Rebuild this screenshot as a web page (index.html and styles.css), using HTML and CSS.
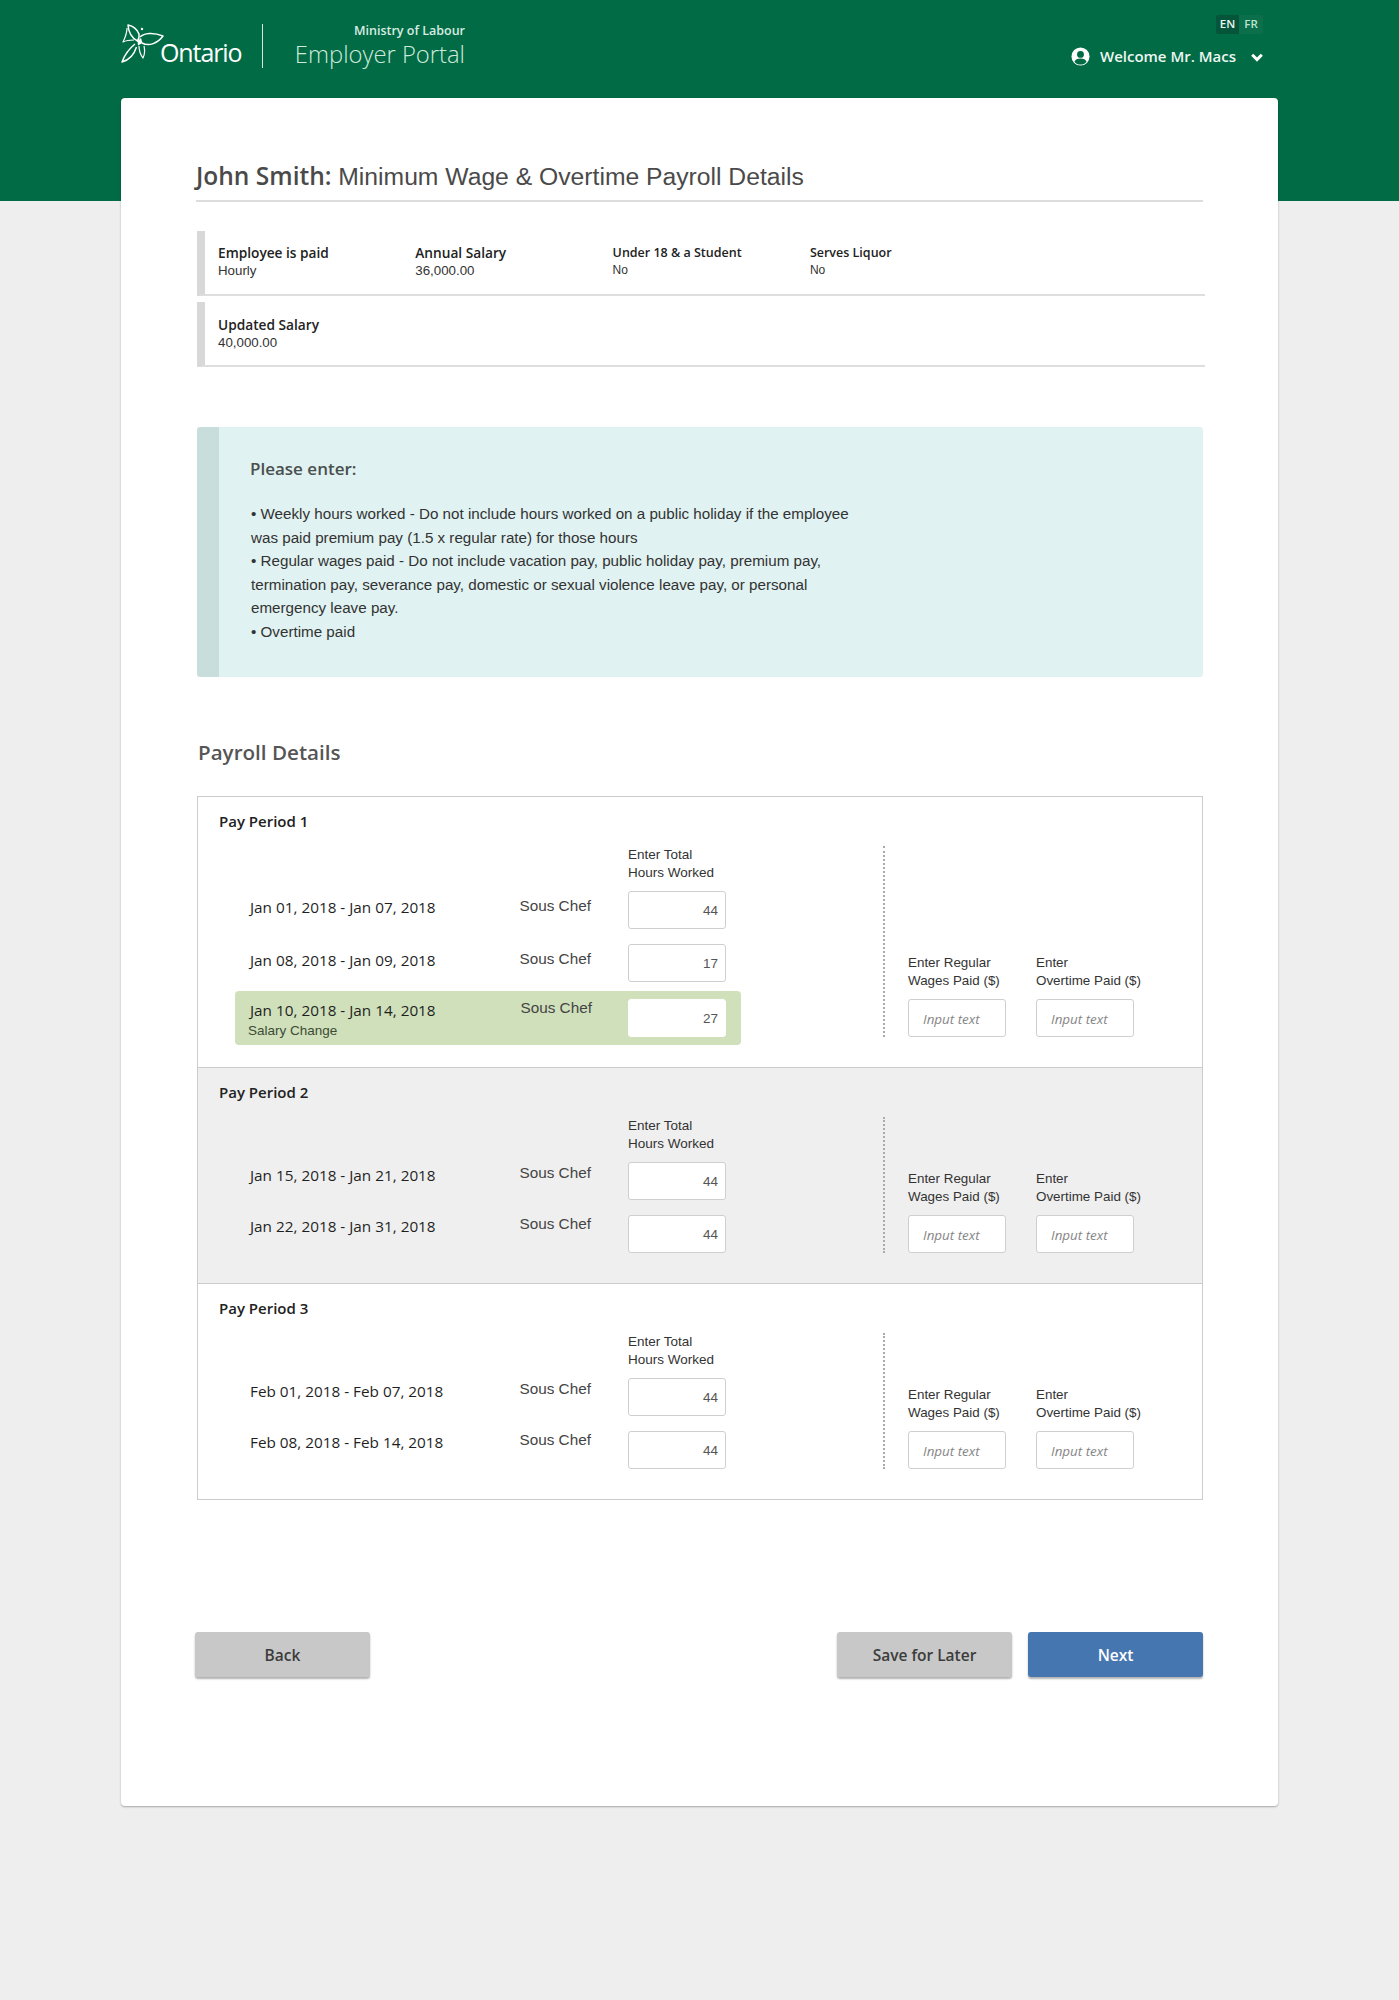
FILE: index.html
```html
<!DOCTYPE html>
<html lang="en">
<head>
  <meta charset="UTF-8">
  <meta name="viewport" content="width=device-width, initial-scale=1.0">
  <title>Employer Portal - Payroll Details</title>
  <link rel="stylesheet" href="styles.css">
</head>
<body>
  <header class="topbar">
    <div class="brand">
      <svg class="trillium" viewBox="0 0 43 40" width="43" height="40" fill="none" stroke="#fff" stroke-width="1.5" stroke-linejoin="round">
        <path d="M7 2 C12 3 16 6 18 11 C18.5 14 18 16 16.5 18 C11 15 7.5 10 7 2 Z"/>
        <path d="M19 14 C23 10 32 9 42 13 C37 20 28 24 21 20"/>
        <path d="M14 21 C9 25 4 31 1 39 C8 37 13 32 15.5 24"/>
        <path d="M6 5 C6 10 4 15 2 19 C6 17 10 17 13 17" stroke-width="1.2"/>
        <path d="M18 23 C18 27 19 31 22 35 C24 31 24 27 23 23" stroke-width="1.2"/>
        <circle cx="21" cy="6" r="1.2" fill="#fff" stroke="none"/>
        <path d="M16.5 18 L20 15 L21.5 20 L17 22.5 Z" fill="#fff" stroke="none"/>
      </svg>
      <span class="wordmark">Ontario</span>
      <span class="brand-sep"></span>
      <div class="portal">
        <div class="ministry">Ministry of Labour</div>
        <div class="portal-name">Employer Portal</div>
      </div>
    </div>
    <div class="account">
      <div class="lang"><span class="lang-on">EN</span><span>FR</span></div>
      <div class="welcome">
        <svg viewBox="0 0 20 20" width="19" height="19">
          <circle cx="10" cy="10" r="9.5" fill="#fff"/>
          <circle cx="10" cy="7.8" r="3.6" fill="#006b45"/>
          <path d="M3.6 15.4 C5 12.6 7.4 12 10 12 C12.6 12 15 12.6 16.4 15.4 C15 17.4 12.6 18.4 10 18.4 C7.4 18.4 5 17.4 3.6 15.4 Z" fill="#006b45"/>
        </svg>
        <span>Welcome Mr. Macs</span>
        <svg class="chev" viewBox="0 0 12 9" width="12" height="9" fill="none" stroke="#fff" stroke-width="3">
          <path d="M1.2 1.8 L6 6.6 L10.8 1.8"/>
        </svg>
      </div>
    </div>
  </header>

  <main class="card">
    <h1 class="title"><b>John Smith:</b> Minimum Wage &amp; Overtime Payroll Details</h1>

    <div class="info-row">
      <div class="info"><strong>Employee is paid</strong><span>Hourly</span></div>
      <div class="info"><strong>Annual Salary</strong><span>36,000.00</span></div>
      <div class="info small"><strong>Under 18 &amp; a Student</strong><span>No</span></div>
      <div class="info small"><strong>Serves Liquor</strong><span>No</span></div>
    </div>
    <div class="info-row">
      <div class="info"><strong>Updated Salary</strong><span>40,000.00</span></div>
    </div>

    <section class="notice">
      <h2>Please enter:</h2>
      <p>• Weekly hours worked - Do not include hours worked on a public holiday if the employee<br>
      was paid premium pay (1.5 x regular rate) for those hours<br>
      • Regular wages paid - Do not include vacation pay, public holiday pay, premium pay,<br>
      termination pay, severance pay, domestic or sexual violence leave pay, or personal<br>
      emergency leave pay.<br>
      • Overtime paid</p>
    </section>

    <h2 class="section-title">Payroll Details</h2>

    <div class="periods">
      <section class="period">
        <h3>Pay Period 1</h3>
        <div class="period-body">
          <div class="hours">
            <div class="hours-label">Enter Total<br>Hours Worked</div>
            <div class="row">
              <div class="date">Jan 01, 2018 - Jan 07, 2018</div>
              <div class="role">Sous Chef</div>
              <div class="field num">44</div>
            </div>
            <div class="row">
              <div class="date">Jan 08, 2018 - Jan 09, 2018</div>
              <div class="role">Sous Chef</div>
              <div class="field num">17</div>
            </div>
            <div class="row changed">
              <div class="date">Jan 10, 2018 - Jan 14, 2018<small>Salary Change</small></div>
              <div class="role">Sous Chef</div>
              <div class="field num">27</div>
            </div>
          </div>
          <div class="wages">
            <div class="wage"><label>Enter Regular<br>Wages Paid ($)</label><div class="field hint">Input text</div></div>
            <div class="wage"><label>Enter<br>Overtime Paid ($)</label><div class="field hint">Input text</div></div>
          </div>
        </div>
      </section>

      <section class="period alt short">
        <h3>Pay Period 2</h3>
        <div class="period-body">
          <div class="hours">
            <div class="hours-label">Enter Total<br>Hours Worked</div>
            <div class="row">
              <div class="date">Jan 15, 2018 - Jan 21, 2018</div>
              <div class="role">Sous Chef</div>
              <div class="field num">44</div>
            </div>
            <div class="row">
              <div class="date">Jan 22, 2018 - Jan 31, 2018</div>
              <div class="role">Sous Chef</div>
              <div class="field num">44</div>
            </div>
          </div>
          <div class="wages">
            <div class="wage"><label>Enter Regular<br>Wages Paid ($)</label><div class="field hint">Input text</div></div>
            <div class="wage"><label>Enter<br>Overtime Paid ($)</label><div class="field hint">Input text</div></div>
          </div>
        </div>
      </section>

      <section class="period short">
        <h3>Pay Period 3</h3>
        <div class="period-body">
          <div class="hours">
            <div class="hours-label">Enter Total<br>Hours Worked</div>
            <div class="row">
              <div class="date">Feb 01, 2018 - Feb 07, 2018</div>
              <div class="role">Sous Chef</div>
              <div class="field num">44</div>
            </div>
            <div class="row">
              <div class="date">Feb 08, 2018 - Feb 14, 2018</div>
              <div class="role">Sous Chef</div>
              <div class="field num">44</div>
            </div>
          </div>
          <div class="wages">
            <div class="wage"><label>Enter Regular<br>Wages Paid ($)</label><div class="field hint">Input text</div></div>
            <div class="wage"><label>Enter<br>Overtime Paid ($)</label><div class="field hint">Input text</div></div>
          </div>
        </div>
      </section>
    </div>

    <div class="actions">
      <button class="btn">Back</button>
      <div class="actions-right">
        <button class="btn">Save for Later</button>
        <button class="btn primary">Next</button>
      </div>
    </div>
  </main>
</body>
</html>
```

FILE: styles.css
```css
* {
  box-sizing: border-box;
}

body {
  margin: 0;
  min-height: 2000px;
  background: #eeeeee;
  font-family: 'Liberation Sans', Arial, sans-serif;
  color: #333;
}

/* header */
.topbar {
  height: 201px;
  background: #006b45;
  padding: 15px 136px 0 121px;
  display: flex;
  justify-content: space-between;
  align-items: flex-start;
  color: #fff;
}

.brand {
  display: flex;
  align-items: flex-start;
}

.trillium {
  margin-top: 8px;
  flex-shrink: 0;
}

.wordmark {
  font-family: 'Open Sans', sans-serif;
  font-size: 25px;
  line-height: 32px;
  letter-spacing: -1.1px;
  margin: 21px 0 0 -4px;
  width: 80px;
}

.brand-sep {
  width: 1px;
  height: 44px;
  background: #d5e8de;
  margin: 9px 0 0 22px;
}

.portal {
  width: 202px;
  text-align: right;
}

.ministry {
  font-family: 'Open Sans', sans-serif;
  font-size: 12.5px;
  font-weight: 600;
  line-height: 18px;
  margin-top: 7px;
  color: #d8ece2;
}

.portal-name {
  font-family: 'Open Sans', sans-serif;
  font-size: 23.8px;
  font-weight: 300;
  line-height: 32px;
  margin-top: -2px;
  color: #cfeadb;
}

.account {
  display: flex;
  flex-direction: column;
  align-items: flex-end;
}

.lang {
  display: flex;
  height: 19px;
  font-family: 'Open Sans', sans-serif;
  font-size: 11.5px;
  font-weight: 600;
  line-height: 18px;
  background: #0b6f4b;
  border-radius: 2px;
  color: #bfe3d0;
  overflow: hidden;
}

.lang span {
  width: 24px;
  text-align: center;
}

.lang .lang-on {
  width: 23px;
  background: #04553a;
  color: #eaf5ef;
}

.welcome {
  display: flex;
  align-items: center;
  margin-top: 12px;
  height: 20px;
  font-family: 'Open Sans', sans-serif;
  font-size: 15px;
  font-weight: 600;
  color: #eef7f2;
}

.welcome span {
  margin: 0 15px 0 10px;
}

.chev {
  margin-top: 2px;
}

/* card */
.card {
  width: 1157px;
  height: 1708px;
  margin: -103px 0 0 121px;
  padding: 63px 75px 0;
  background: #fff;
  border-radius: 4px;
  box-shadow: 0 1px 2px rgba(0,0,0,0.3);
}

.title {
  margin: 0 0 29px;
  padding-bottom: 7px;
  border-bottom: 2px solid #dddddd;
  font-size: 24.7px;
  font-weight: 400;
  line-height: 32px;
  color: #4a4a4a;
}

.title b {
  font-family: 'Open Sans', sans-serif;
  font-weight: 600;
  font-size: 24.5px;
  line-height: 1;
}

.info-row {
  display: flex;
  height: 65px;
  margin: 0 -2px 6px 1px;
  padding: 13px 0 0 13px;
  border-left: 8px solid #d8d8d8;
  border-bottom: 2px solid #dedede;
}

.info-row + .info-row {
  padding-top: 14px;
}

.info {
  width: 197.3px;
  font-size: 13.3px;
  line-height: 18px;
  color: #333;
}

.info strong {
  display: block;
  font-family: 'Open Sans', sans-serif;
  font-size: 13.7px;
  font-weight: 600;
  color: #222;
}

.info.small {
  font-size: 12px;
  line-height: 16px;
}

.info.small strong {
  font-size: 12.5px;
  line-height: 18px;
}

.notice {
  height: 250px;
  margin: 60px 0 0 1px;
  padding: 30px 0 0 31px;
  background: #e0f2f1;
  border-left: 22px solid #c8dedc;
  border-radius: 3px;
}

.notice h2 {
  margin: 0 0 21px;
  font-family: 'Open Sans', sans-serif;
  font-size: 17px;
  font-weight: 600;
  line-height: 24px;
  color: #4a4f4f;
}

.notice p {
  margin: 0 0 0 1px;
  font-size: 15.2px;
  line-height: 23.6px;
  color: #333;
  white-space: nowrap;
}

.section-title {
  margin: 61px 0 30px 2px;
  font-family: 'Open Sans', sans-serif;
  font-size: 20.6px;
  font-weight: 600;
  line-height: 28px;
  color: #555;
}

/* pay periods */
.periods {
  margin-left: 1px;
  border: 1px solid #cccccc;
}

.period {
  padding: 14px 0 15px 21px;
  border-bottom: 1px solid #cccccc;
}

.period:last-child {
  border-bottom: 0;
}

.period.alt {
  background: #efefef;
}

.period h3 {
  margin: 0 0 15px;
  font-family: 'Open Sans', sans-serif;
  font-size: 15px;
  font-weight: 600;
  line-height: 20px;
  color: #222;
}

.period-body {
  display: flex;
}

.hours {
  width: 522px;
  padding-left: 16px;
}

.hours-label {
  margin: 0 0 10px 393px;
  font-size: 13.5px;
  line-height: 17.5px;
  color: #333;
  white-space: nowrap;
}

.row {
  display: flex;
  align-items: flex-start;
  width: 506px;
  margin-bottom: 15px;
  padding-left: 14px;
}

.date {
  width: 270.5px;
  padding: 5px 0 0 1px;
  font-family: 'Open Sans', sans-serif;
  font-size: 15.3px;
  font-weight: 500;
  line-height: 22px;
  color: #1f1f1f;
}

.date small {
  display: block;
  margin: 1px 0 0 -2px;
  font-family: 'Liberation Sans', Arial, sans-serif;
  font-size: 13.5px;
  font-weight: 400;
  line-height: 17px;
  color: #3d4a35;
}

.role {
  width: 108.5px;
  padding-top: 4px;
  font-size: 15.3px;
  line-height: 22px;
  color: #444;
}

/* the two-row periods sit their date and role text higher against the inputs */
.short .date {
  padding-top: 2px;
}

.short .role {
  padding-top: 0;
}

.short .row + .row .date {
  padding-top: 0;
}

.short .row + .row .role {
  margin-top: -2px;
}

.row.changed {
  height: 54px;
  margin-top: -6px;
  margin-bottom: 7px;
  padding-top: 8px;
  background: #cfe0ba;
  border-radius: 4px;
}

.row.changed .date {
  padding-top: 0;
}

.row.changed .role {
  padding-top: 0;
  margin-top: -2px;
  padding-left: 1px;
}

.field {
  width: 98px;
  height: 38px;
  flex-shrink: 0;
  background: #fff;
  border: 1px solid #cfcfcf;
  border-radius: 3px;
  line-height: 38px;
}

.num {
  padding-right: 7px;
  text-align: right;
  font-size: 13.5px;
  color: #555;
}

.row.changed .field {
  border-color: #fff;
}

.hint {
  padding-left: 14px;
  font-family: 'Open Sans', sans-serif;
  font-size: 13.4px;
  font-style: italic;
  color: #858585;
}

.wages {
  display: flex;
  align-items: flex-end;
  gap: 30px;
  margin: 0 0 15px 142px;
  padding-left: 23px;
  border-left: 2px dotted #aaaaaa;
}

.wage {
  width: 98px;
}

.wage label {
  display: block;
  margin-bottom: 10px;
  font-size: 13.4px;
  line-height: 17.5px;
  color: #333;
  white-space: nowrap;
}

/* buttons */
.actions {
  display: flex;
  justify-content: space-between;
  margin: 132px 0 0 -1px;
}

.actions-right {
  display: flex;
  gap: 16px;
}

.btn {
  width: 175px;
  height: 45px;
  padding: 0;
  border: 0;
  border-radius: 3px;
  background: #c8c8c8;
  box-shadow: 0 2px 2px rgba(0,0,0,0.3);
  font-family: 'Open Sans', sans-serif;
  font-size: 15.5px;
  font-weight: 600;
  color: #3c3c3c;
}

.btn.primary {
  background: #4676b0;
  color: #fff;
}
```
